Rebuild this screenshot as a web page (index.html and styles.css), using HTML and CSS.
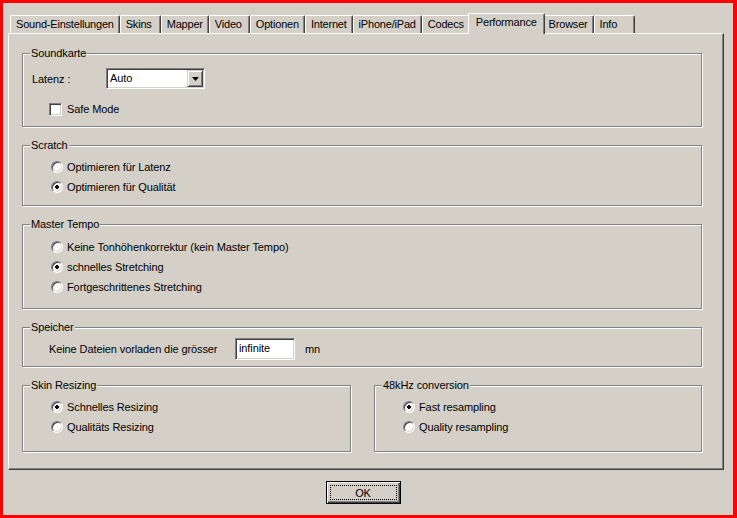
FILE: index.html
```html
<!DOCTYPE html>
<html>
  <head>
    <title>Performance</title>
    <link rel="stylesheet" href="styles.css">
  </head>
  <body>
    <div class="window">
      <div class="tabs"> <!-- Tab strip -->
        <span class="tab">Sound-Einstellungen</span>
        <span class="tab">Skins</span>
        <span class="tab">Mapper</span>
        <span class="tab">Video</span>
        <span class="tab">Optionen</span>
        <span class="tab">Internet</span>
        <span class="tab">iPhone/iPad</span>
        <span class="tab">Codecs</span>
        <span class="tab active">Performance</span>
        <span class="tab">Browser</span>
        <span class="tab">Info</span>
      </div>
      <div class="panel">
        <fieldset class="group group-sound">
          <legend>Soundkarte</legend>
          <div class="row">
            <span class="field-label">Latenz :</span>
            <div class="combo">
              <span class="combo-text">Auto</span>
              <span class="combo-btn">
                <svg width="7" height="4" viewBox="0 0 7 4"><path d="M0 0h7L3.5 4z" fill="#000"/></svg>
              </span>
            </div>
          </div>
          <div class="option"><span class="checkbox"></span>Safe Mode</div>
        </fieldset>

        <fieldset class="group">
          <legend>Scratch</legend>
          <div class="option"><span class="radio"></span>Optimieren für Latenz</div>
          <div class="option"><span class="radio checked"></span>Optimieren für Qualität</div>
        </fieldset>

        <fieldset class="group group-tempo">
          <legend>Master Tempo</legend>
          <div class="option"><span class="radio"></span>Keine Tonhöhenkorrektur (kein Master Tempo)</div>
          <div class="option"><span class="radio checked"></span>schnelles Stretching</div>
          <div class="option"><span class="radio"></span>Fortgeschrittenes Stretching</div>
        </fieldset>

        <fieldset class="group group-memory">
          <legend>Speicher</legend>
          <div class="option">
            <span class="memory-label">Keine Dateien vorladen die grösser</span>
            <span class="textbox">infinite</span>
            <span class="unit">mn</span>
          </div>
        </fieldset>

        <div class="pair">
          <fieldset class="group group-low">
            <legend>Skin Resizing</legend>
            <div class="option"><span class="radio checked"></span>Schnelles Resizing</div>
            <div class="option"><span class="radio"></span>Qualitäts Resizing</div>
          </fieldset>
          <fieldset class="group group-low">
            <legend>48kHz conversion</legend>
            <div class="option"><span class="radio checked"></span>Fast resampling</div>
            <div class="option"><span class="radio"></span>Quality resampling</div>
          </fieldset>
        </div>
      </div>
      <div class="footer">
        <button class="ok">OK</button>
      </div>
    </div>
  </body>
</html>
```

FILE: styles.css
```css
/* Classic windows dialog look */
body {
  margin: 0;
  font-family: "Liberation Sans", Arial, sans-serif;
  font-size: 11px;
  letter-spacing: -0.1px;
  color: #000;
}

.window {
  box-sizing: border-box;
  width: 737px;
  height: 518px;
  border: 3px solid #f00; /* Red frame */
  border-right-width: 4px;
  background-color: #d4d0c8; /* Dialog grey */
  padding: 10px 9px 0 5px;
}

/* Tab strip */
.tabs {
  display: flex;
  align-items: flex-end;
  height: 21px;
  padding-left: 2px;
  margin-bottom: -1px;
  letter-spacing: -0.2px;
}

.tab {
  box-sizing: border-box;
  min-width: 41px;
  height: 18px;
  line-height: 17px;
  padding: 0 5px;
  margin-bottom: 1px;
  border-top: 1px solid #fff;
  border-left: 1px solid #fff;
  border-right: 1px solid #404040;
  border-radius: 2px 2px 0 0;
  box-shadow: inset -1px 0 #808080;
  background-color: #d4d0c8;
  white-space: nowrap;
}

.tab.active {
  height: 21px;
  margin: 0 -2px;
  padding: 0 7px 3px 7px;
  z-index: 1;
}

/* Page body of the tab control */
.panel {
  box-sizing: border-box;
  height: 437px;
  padding: 13px 21px 0 13px;
  border: 1px solid;
  border-color: #fff #404040 #404040 #fff;
  box-shadow: inset -1px -1px #808080;
}

/* Etched group boxes */
.group {
  margin: 0 0 12px 0;
  padding: 5px 0 8px 0;
  border: 1px solid #808080;
  box-shadow: inset 1px 1px #fff, 1px 1px #fff;
  min-width: 0;
}

.group legend {
  margin-left: 7px;
  padding: 0 1px;
  line-height: 13px;
  background-color: #d4d0c8;
}

.group-sound {
  padding: 8px 0 7px 0;
}

.group-tempo {
  padding: 6px 0 11px 0;
}

.group-memory {
  padding-bottom: 7px;
}

.group-low {
  margin-bottom: 0;
  padding-bottom: 14px;
}

.pair {
  display: grid;
  grid-template-columns: 329px 328px;
  column-gap: 23px;
}

.row {
  display: flex;
  align-items: center;
  height: 21px;
  padding-left: 9px;
  margin-bottom: 10px;
}

.field-label {
  width: 74px;
}

/* Drop down list */
.combo {
  box-sizing: border-box;
  display: flex;
  width: 99px;
  height: 21px;
  border: 1px solid;
  border-color: #808080 #fff #fff #808080;
  box-shadow: inset 1px 1px #404040, inset -1px -1px #d4d0c8;
  background-color: #fff;
  padding: 1px;
}

.combo-text {
  flex: 1;
  line-height: 17px;
  padding-left: 2px;
}

.combo-btn {
  box-sizing: border-box;
  display: flex;
  align-items: center;
  justify-content: center;
  width: 16px;
  height: 17px;
  border: 1px solid;
  border-color: #d4d0c8 #404040 #404040 #d4d0c8;
  box-shadow: inset 1px 1px #fff, inset -1px -1px #808080;
  background-color: #d4d0c8;
}

/* Check and radio rows */
.option {
  display: flex;
  align-items: center;
  height: 20px;
  padding-left: 26px;
  white-space: nowrap;
}

.checkbox {
  box-sizing: border-box;
  width: 13px;
  height: 13px;
  margin-right: 5px;
  border: 1px solid;
  border-color: #808080 #fff #fff #808080;
  box-shadow: inset 1px 1px #404040, inset -1px -1px #d4d0c8;
  background-color: #fff;
}

.radio {
  box-sizing: border-box;
  width: 12px;
  height: 12px;
  margin: 0 4px 0 2px;
  border-radius: 50%;
  border: 1px solid;
  border-color: #808080 #fff #fff #808080;
  box-shadow: inset 1px 1px #404040, inset -1px -1px #d4d0c8;
  background-color: #fff;
}

.radio.checked {
  background: radial-gradient(circle, #000 0, #000 1.6px, #fff 2.2px);
}

.memory-label {
  width: 186px;
}

.textbox {
  box-sizing: border-box;
  width: 60px;
  height: 22px;
  line-height: 18px;
  padding-left: 3px;
  border: 1px solid;
  border-color: #808080 #fff #fff #808080;
  box-shadow: inset 1px 1px #404040, inset -1px -1px #d4d0c8;
  background-color: #fff;
}

.unit {
  margin-left: 10px;
}

/* Default push button */
.footer {
  display: flex;
  justify-content: center;
  padding: 11px 6px 0 0;
}

.ok {
  width: 75px;
  height: 23px;
  padding: 0;
  font: inherit;
  letter-spacing: inherit;
  color: #000;
  border: 1px solid #000;
  background-color: #d4d0c8;
  box-shadow: inset 1px 1px #fff, inset -1px -1px #404040, inset -2px -2px #808080;
  outline: 1px dotted #000;
  outline-offset: -5px;
}
```
